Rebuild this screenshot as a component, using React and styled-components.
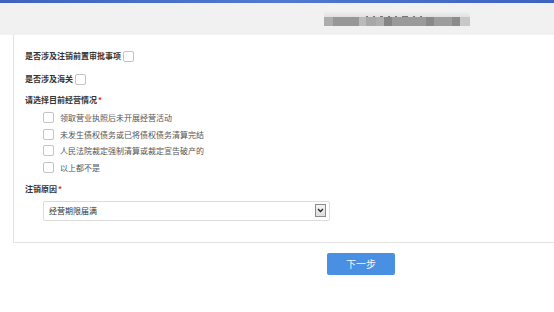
import React from 'react';
import styled, { createGlobalStyle } from 'styled-components';

const GlobalStyle = createGlobalStyle`
    html, body {
        margin: 0;
        padding: 0;
        background: #ffffff;
    }
    body {
        font-family: "Noto Sans CJK SC", "Noto Sans", "Liberation Sans", sans-serif;
        color: #333;
    }
`;

const Page = styled.div`
    width: 554px;
    height: 312px;
    overflow: hidden;
    display: flex;
    flex-direction: column;
`;

const TopBar = styled.div`
    height: 3px;
    background: linear-gradient(90deg, #3f63bd 0%, #5179cf 50%, #3d62c2 100%);
`;

const Header = styled.div`
    height: 32px;
    background: #f1f1f1;
    display: flex;
    align-items: flex-start;
    padding-left: 324px;
    padding-top: 8px;
    box-sizing: border-box;
`;

const Mosaic = styled.div`
    display: flex;
    flex-direction: column;
    width: 146px;
`;

const MosaicTop = styled.div`
    height: 6px;
    background: linear-gradient(180deg, #f1f1f1 0%, #e0e0e0 100%);
    border-radius: 6px 10px 0 0;
    display: flex;
    align-items: flex-end;
    gap: 5px;
    padding-left: 42px;
    box-sizing: border-box;
`;

const Dot = styled.span`
    width: ${p => p.w || 2}px;
    height: 1px;
    background: #777;
`;

const MosaicRow = styled.div`
    display: flex;
    height: 9px;
`;

const Tile = styled.span`
    flex: 0 0 ${p => p.w}px;
    background: ${p => p.c};
`;

const Panel = styled.div`
    margin-left: 13px;
    margin-right: -20px;
    border-left: 1px solid #e2e2e2;
    border-bottom: 1px solid #e2e2e2;
    padding: 13px 0 21px 11px;
    display: flex;
    flex-direction: column;
`;

const FieldRow = styled.div`
    display: flex;
    align-items: center;
    height: 16px;
    margin-top: ${p => p.mt || 0}px;
`;

const Label = styled.span`
    font-size: 8px;
    font-weight: bold;
    color: #333;
    line-height: 16px;
`;

const Required = styled.span`
    color: #e02020;
    margin-left: 1px;
`;

const Box = styled.span`
    display: inline-block;
    width: 9px;
    height: 9px;
    border: 1px solid #c4c4c4;
    border-radius: 2px;
    background: #fff;
    margin-left: ${p => p.ml || 0}px;
    flex: 0 0 auto;
`;

const OptionList = styled.div`
    display: flex;
    flex-direction: column;
    padding: 1px 0 0 18px;
`;

const Option = styled.div`
    display: flex;
    align-items: center;
    height: 16.7px;
    gap: 6px;
`;

const OptionText = styled.span`
    font-size: 8px;
    color: #555;
`;

const SelectBox = styled.div`
    margin: 4px 0 0 18px;
    width: 287px;
    height: 20px;
    box-sizing: border-box;
    border: 1px solid #dcdcdc;
    border-radius: 2px;
    background: #fff;
    display: flex;
    align-items: center;
    justify-content: space-between;
    padding: 0 3px 0 5px;
`;

const SelectText = styled.span`
    font-size: 8px;
    color: #333;
`;

const ArrowButton = styled.span`
    width: 11px;
    height: 13px;
    box-sizing: border-box;
    border: 1px solid #8a8a8a;
    background: linear-gradient(180deg, #f4f4f4, #dedede);
    display: flex;
    align-items: center;
    justify-content: center;
`;

const Footer = styled.div`
    display: flex;
    padding: 10px 0 0 327px;
`;

const NextButton = styled.button`
    width: 68px;
    height: 22px;
    border: none;
    border-radius: 2px;
    background: #4a90e2;
    color: #f4f8ff;
    font-family: inherit;
    font-size: 10px;
    padding: 0;
    cursor: pointer;
`;

const tiles = [
    [9, '#adadad'], [26, '#979797'], [7, '#bababa'], [10, '#a8a8a8'], [8, '#afafaf'],
    [8, '#858585'], [34, '#9a9a9a'], [8, '#898989'], [18, '#9d9d9d'], [8, '#8b8b8b'], [10, '#c8c8c8'],
];

const options = [
    '领取营业执照后未开展经营活动',
    '未发生债权债务或已将债权债务清算完结',
    '人民法院裁定强制清算或裁定宣告破产的',
    '以上都不是',
];

function App() {
    return (
        <Page>
            <GlobalStyle />
            <TopBar />
            <Header>
                <Mosaic>
                    <MosaicTop>
                        <Dot /><Dot /><Dot w={3} /><Dot /><Dot /><Dot w={6} /><Dot /><Dot />
                    </MosaicTop>
                    <MosaicRow>
                        {tiles.map(([w, c], i) => <Tile key={i} w={w} c={c} />)}
                    </MosaicRow>
                </Mosaic>
            </Header>
            <Panel>
                <FieldRow>
                    <Label>是否涉及注销前置审批事项</Label>
                    <Box ml={2} />
                </FieldRow>
                <FieldRow mt={7}>
                    <Label>是否涉及海关</Label>
                    <Box ml={2} />
                </FieldRow>
                <FieldRow mt={5}>
                    <Label>请选择目前经营情况<Required>*</Required></Label>
                </FieldRow>
                <OptionList>
                    {options.map(text => (
                        <Option key={text}>
                            <Box />
                            <OptionText>{text}</OptionText>
                        </Option>
                    ))}
                </OptionList>
                <FieldRow mt={5}>
                    <Label>注销原因<Required>*</Required></Label>
                </FieldRow>
                <SelectBox>
                    <SelectText>经营期限届满</SelectText>
                    <ArrowButton>
                        <svg width="7" height="5" viewBox="0 0 7 5">
                            <path d="M1 1 L3.5 3.5 L6 1" fill="none" stroke="#222" strokeWidth="1.3" />
                        </svg>
                    </ArrowButton>
                </SelectBox>
            </Panel>
            <Footer>
                <NextButton>下一步</NextButton>
            </Footer>
        </Page>
    );
}

export default App;
